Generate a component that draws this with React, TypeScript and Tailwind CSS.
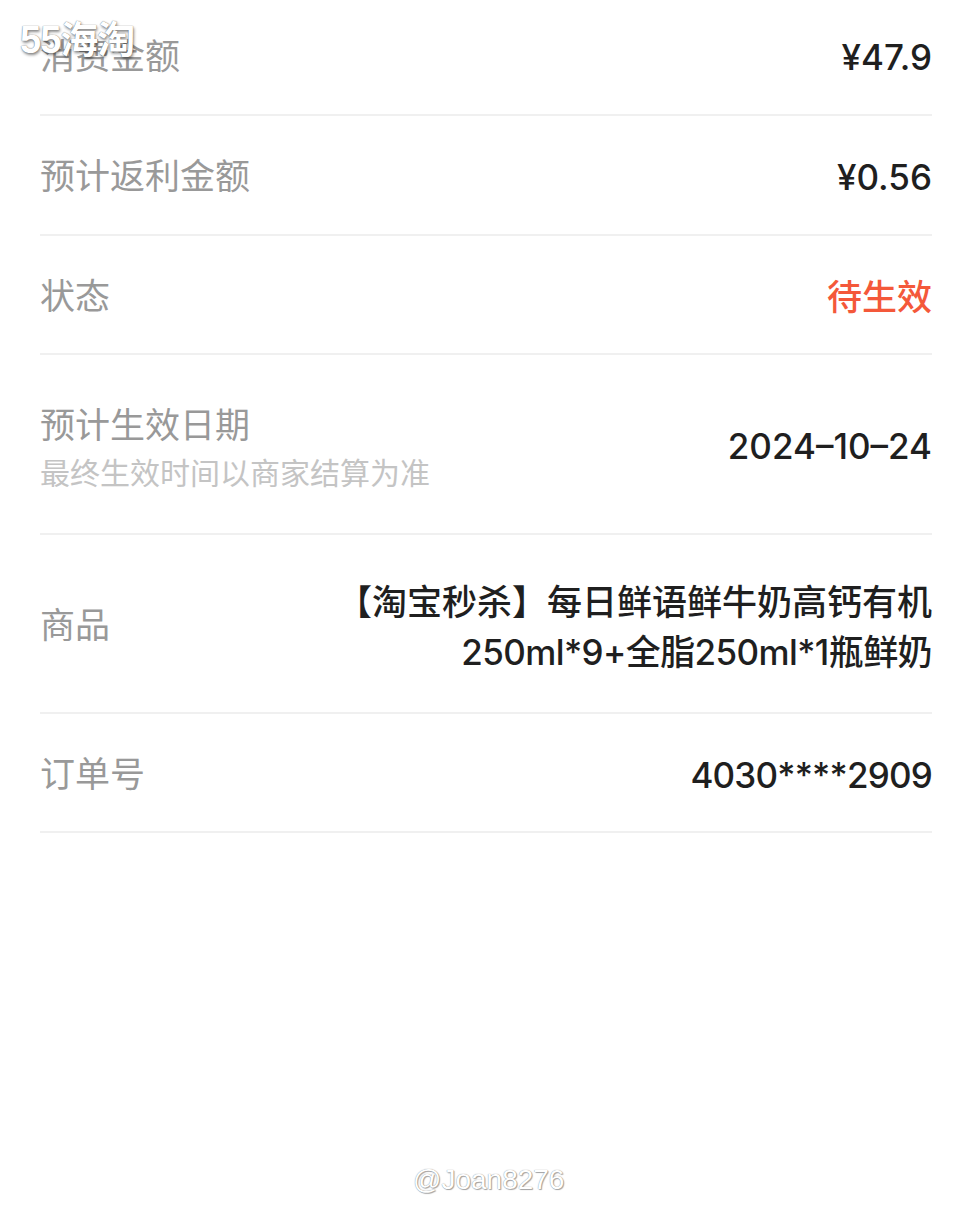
const font = { fontFamily: '"Liberation Sans", "Noto Sans CJK SC", sans-serif' }
const valueFont = { fontFamily: 'Inter, "Noto Sans CJK SC", sans-serif' }

const Row = ({ h, children }: { h: string; children: React.ReactNode }) => (
  <div className={`flex items-center justify-between border-b-2 border-[#f0f0f0] ${h}`}>{children}</div>
)

export default function App() {
  return (
    <div className="relative w-[972px] h-[1216px] bg-white overflow-hidden" style={font}>
      <div className="px-[40px]">
        <Row h="h-[116px]">
          <span className="text-[35px] text-[#999999]">消费金额</span>
          <span className="text-[35px] font-medium text-[#1f1f1f]" style={valueFont}>¥47.9</span>
        </Row>
        <Row h="h-[120px] pt-[4px]">
          <span className="text-[35px] text-[#999999]">预计返利金额</span>
          <span className="text-[35px] font-medium text-[#1f1f1f]" style={valueFont}>¥0.56</span>
        </Row>
        <Row h="h-[119px] pt-[6px]">
          <span className="text-[35px] text-[#999999]">状态</span>
          <span className="text-[35px] font-medium text-[#f4583a]" style={valueFont}>待生效</span>
        </Row>
        <Row h="h-[180px] pt-[12px]">
          <div className="flex flex-col">
            <span className="text-[35px] leading-[48px] text-[#999999]">预计生效日期</span>
            <span className="text-[30px] leading-[48px] text-[#c4c4c4]">最终生效时间以商家结算为准</span>
          </div>
          <span className="text-[35px] font-medium text-[#1f1f1f] -mt-[8px]" style={valueFont}>2024–10–24</span>
        </Row>
        <Row h="h-[179px] pt-[6px]">
          <span className="text-[35px] text-[#999999]">商品</span>
          <div className="text-right text-[35px] leading-[50px] font-medium text-[#1f1f1f]" style={valueFont}>
            <div>【淘宝秒杀】每日鲜语鲜牛奶高钙有机</div>
            <div className="tracking-[-0.6px]">250ml*9+全脂250ml*1瓶鲜奶</div>
          </div>
        </Row>
        <Row h="h-[119px] pt-[5px]">
          <span className="text-[35px] text-[#999999]">订单号</span>
          <span className="text-[35px] font-medium text-[#1f1f1f] tracking-[-0.8px]" style={valueFont}>4030****2909</span>
        </Row>
      </div>

      <div className="absolute left-[20px] top-[12px] text-[38px] font-bold text-white tracking-[-1px] [text-shadow:0_0_1px_#555,1px_2px_3px_rgba(0,0,0,0.45)]">
        55海淘
      </div>
      <div className="absolute left-[413px] top-[1159px] text-[28px] text-white [text-shadow:0_0_1px_#777,1px_1px_1px_rgba(0,0,0,0.35)]">
        @Joan8276
      </div>
    </div>
  )
}
